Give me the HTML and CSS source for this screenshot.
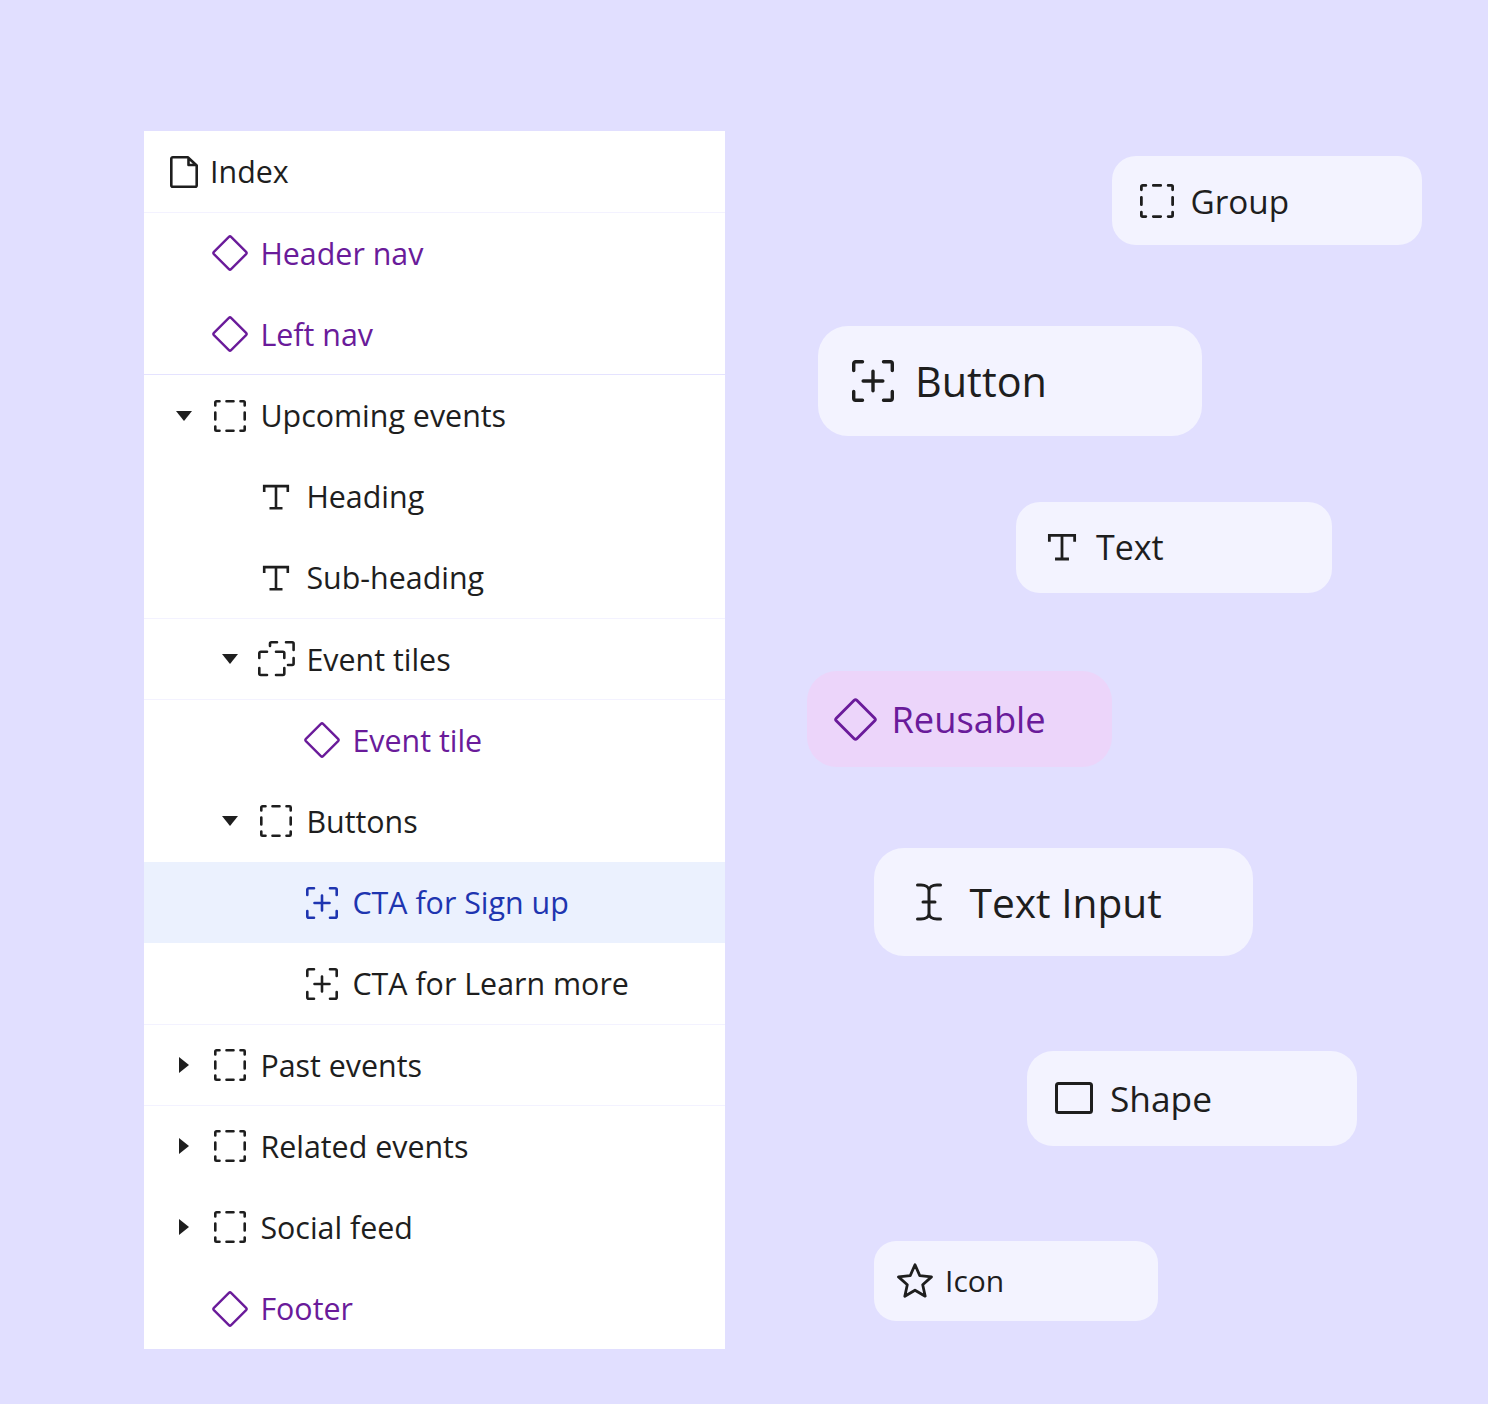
FILE: index.html
```html
<html>
    <head>
        <title>Layers</title>
        <meta charset="UTF-8" />
        <link rel="stylesheet" href="styles.css">
    </head>
    <body>
        <svg class="defs" width="0" height="0">
            <symbol id="i-page" viewBox="0 0 28 32">
                <path d="M2.800 1.300h15L26.700 9.500V29.200a1.500 1.500 0 0 1-1.500 1.500H2.800a1.500 1.500 0 0 1-1.500-1.500V2.800a1.500 1.500 0 0 1 1.500-1.500zM18.500 2V9H26" fill="none" stroke="currentColor" stroke-width="2.600" stroke-linejoin="round"/>
            </symbol>
            <symbol id="i-diamond" viewBox="0 0 36 36">
                <path d="M16.900 1.900a1.600 1.600 0 0 1 2.200 0L34.100 16.900a1.600 1.600 0 0 1 0 2.200L19.100 34.100a1.600 1.600 0 0 1-2.200 0L1.900 19.100a1.600 1.600 0 0 1 0-2.200z" fill="none" stroke="currentColor" stroke-width="2.400"/>
            </symbol>
            <symbol id="i-group" viewBox="0 0 32 32">
                <path d="M1.300 5.500V2.500a1.200 1.200 0 0 1 1.200-1.200H5.500M12.500 1.300h7M26.500 1.300h3a1.200 1.200 0 0 1 1.200 1.200V5.500M30.700 12.500v7M30.700 26.500v3a1.200 1.200 0 0 1-1.200 1.200H26.500M19.500 30.700h-7M5.500 30.700h-3a1.200 1.200 0 0 1-1.200-1.200V26.500M1.300 19.500v-7" fill="none" stroke="currentColor" stroke-width="2.600" stroke-linecap="round"/>
            </symbol>
            <symbol id="i-tiles" viewBox="0 0 37 36">
                <path d="M12 5V2.800a1.500 1.500 0 0 1 1.500-1.500H19M28 1.300h6.100a1.500 1.500 0 0 1 1.500 1.500V9M35.600 17v5.500a1.500 1.500 0 0 1-1.500 1.500H30M1.300 17v-4.800a1.500 1.500 0 0 1 1.500-1.500H9M18 10.700h6.800a1.500 1.500 0 0 1 1.500 1.500V17M1.300 27v5.500a1.500 1.500 0 0 0 1.500 1.500H9M18 34h6.800a1.500 1.500 0 0 0 1.500-1.500V27" fill="none" stroke="currentColor" stroke-width="2.600" stroke-linecap="round"/>
            </symbol>
            <symbol id="i-cta" viewBox="0 0 32 32">
                <path d="M1.300 8V2.800a1.500 1.500 0 0 1 1.500-1.500H8M24 1.300h5.200a1.500 1.500 0 0 1 1.500 1.500V8M30.700 24v5.200a1.500 1.500 0 0 1-1.500 1.500H24M8 30.700H2.800a1.500 1.500 0 0 1-1.500-1.500V24M16 8.500v15M8.500 16h15" fill="none" stroke="currentColor" stroke-width="2.600" stroke-linecap="round"/>
            </symbol>
            <symbol id="i-text" viewBox="0 0 28 28">
                <path d="M2.200 9V3.100H25.800V9M14 3.100V25.200M7.500 25.200H20.500" fill="none" stroke="currentColor" stroke-width="2.600"/>
            </symbol>
            <symbol id="i-input" viewBox="0 0 26 38">
                <path d="M1.500 2h3.500c4.500 0 8 2 8 5.500v23c0 3.500-3.500 5.500-8 5.500H1.500M24.500 2h-3.500c-4.500 0-8 2-8 5.500v23c0 3.500 3.500 5.500 8 5.500h3.500M7 19h12" fill="none" stroke="currentColor" stroke-width="3" stroke-linecap="round"/>
            </symbol>
            <symbol id="i-shape" viewBox="0 0 38 32">
                <rect x="1.500" y="1.500" width="35" height="29" rx="2" fill="none" stroke="currentColor" stroke-width="3"/>
            </symbol>
            <symbol id="i-star" viewBox="0 0 36 35">
                <path d="M18 1.700l4.800 11 11.700 1.200-8.800 7.800 2.500 11.500L18 27.200 7.800 33.200l2.500-11.500-8.800-7.800 11.700-1.200z" fill="none" stroke="currentColor" stroke-width="2.800" stroke-linejoin="round"/>
            </symbol>
            <symbol id="i-down" viewBox="0 0 16 10">
                <path d="M0 0h16L8 10z" fill="currentColor"/>
            </symbol>
            <symbol id="i-right" viewBox="0 0 10 16">
                <path d="M0 0v16L10 8z" fill="currentColor"/>
            </symbol>
        </svg>

        <ul class="tree">
            <li class="row line">
                <svg class="icon page"><use href="#i-page"/></svg>
                <span>Index</span>
            </li>
            <li class="row depth-1 reusable">
                <svg class="icon diamond"><use href="#i-diamond"/></svg>
                <span>Header nav</span>
            </li>
            <li class="row depth-1 reusable line-strong">
                <svg class="icon diamond"><use href="#i-diamond"/></svg>
                <span>Left nav</span>
            </li>
            <li class="row depth-1">
                <svg class="caret down"><use href="#i-down"/></svg>
                <svg class="icon group"><use href="#i-group"/></svg>
                <span>Upcoming events</span>
            </li>
            <li class="row depth-2">
                <svg class="icon text"><use href="#i-text"/></svg>
                <span>Heading</span>
            </li>
            <li class="row depth-2 line">
                <svg class="icon text"><use href="#i-text"/></svg>
                <span>Sub-heading</span>
            </li>
            <li class="row depth-2 line">
                <svg class="caret down"><use href="#i-down"/></svg>
                <svg class="icon tiles"><use href="#i-tiles"/></svg>
                <span>Event tiles</span>
            </li>
            <li class="row depth-3 reusable">
                <svg class="icon diamond"><use href="#i-diamond"/></svg>
                <span>Event tile</span>
            </li>
            <li class="row depth-2">
                <svg class="caret down"><use href="#i-down"/></svg>
                <svg class="icon group"><use href="#i-group"/></svg>
                <span>Buttons</span>
            </li>
            <li class="row depth-3 selected">
                <svg class="icon group"><use href="#i-cta"/></svg>
                <span>CTA for Sign up</span>
            </li>
            <li class="row depth-3 line">
                <svg class="icon group"><use href="#i-cta"/></svg>
                <span>CTA for Learn more</span>
            </li>
            <li class="row depth-1 line">
                <svg class="caret right"><use href="#i-right"/></svg>
                <svg class="icon group"><use href="#i-group"/></svg>
                <span>Past events</span>
            </li>
            <li class="row depth-1">
                <svg class="caret right"><use href="#i-right"/></svg>
                <svg class="icon group"><use href="#i-group"/></svg>
                <span>Related events</span>
            </li>
            <li class="row depth-1">
                <svg class="caret right"><use href="#i-right"/></svg>
                <svg class="icon group"><use href="#i-group"/></svg>
                <span>Social feed</span>
            </li>
            <li class="row depth-1 reusable">
                <svg class="icon diamond"><use href="#i-diamond"/></svg>
                <span>Footer</span>
            </li>
        </ul>

        <div class="chip chip-group">
            <svg><use href="#i-group"/></svg>
            <span>Group</span>
        </div>
        <div class="chip chip-button">
            <svg><use href="#i-cta"/></svg>
            <span>Button</span>
        </div>
        <div class="chip chip-text">
            <svg><use href="#i-text"/></svg>
            <span>Text</span>
        </div>
        <div class="chip chip-reusable">
            <svg><use href="#i-diamond"/></svg>
            <span>Reusable</span>
        </div>
        <div class="chip chip-input">
            <svg><use href="#i-input"/></svg>
            <span>Text Input</span>
        </div>
        <div class="chip chip-shape">
            <svg><use href="#i-shape"/></svg>
            <span>Shape</span>
        </div>
        <div class="chip chip-icon">
            <svg><use href="#i-star"/></svg>
            <span>Icon</span>
        </div>
    </body>
</html>
```

FILE: styles.css
```css
html,
body {
    height: 1404px;
}
body {
    margin: 0;
    position: relative;
    overflow: hidden;
    background: #e1dfff;
    color: #1e1e1e;
    font-family: "Open Sans", sans-serif;
}
.defs {
    position: absolute;
}

/* Layer tree */
.tree {
    list-style: none;
    margin: 131px 0 0 144px;
    padding: 0;
    width: 581px;
    background: #fff;
    display: flex;
    flex-direction: column;
}
.row {
    height: 81.2px;
    box-sizing: border-box;
    display: flex;
    align-items: center;
    position: relative;
    padding-top: 0.8px;
    padding-left: 26px;
    font-size: 30.4px;
}
.line {
    box-shadow: 0 1px 0 #f3f2ff;
}
.line-strong {
    box-shadow: inset 0 -1px 0 #e5e3ff;
}
.depth-1 {
    padding-left: 68px;
}
.depth-2 {
    padding-left: 114px;
}
.depth-3 {
    padding-left: 160px;
}
.reusable {
    color: #6a1b9a;
}
.selected {
    background: #ebf1fe;
    color: #1e35b0;
}
.icon {
    flex: none;
}
.page {
    width: 28px;
    height: 32px;
    margin-right: 12px;
}
.diamond {
    width: 36px;
    height: 36px;
    margin-right: 12.4px;
}
.group {
    width: 32px;
    height: 32px;
    margin: 0 14.4px 0 2px;
}
.tiles {
    width: 37px;
    height: 36px;
    margin-right: 11.4px;
}
.text {
    width: 28px;
    height: 28px;
    margin: 0 16.400px 0 4px;
}
.caret {
    position: absolute;
}
.caret.down {
    width: 16px;
    height: 10px;
}
.caret.right {
    width: 10px;
    height: 16px;
}
.depth-1 .caret {
    left: 32px;
}
.depth-2 .caret {
    left: 78px;
}
.depth-1 .caret.right {
    left: 35px;
}

/* Floating chips, each one has its own place on the canvas */
.chip {
    position: absolute;
    box-sizing: border-box;
    display: flex;
    align-items: center;
    background: #f3f3ff;
}
.chip svg {
    flex: none;
}
.chip-group {
    left: 1112px;
    top: 156px;
    width: 310px;
    height: 89px;
    border-radius: 24px;
    padding-left: 28px;
    font-size: 33.3px;
}
.chip-group svg {
    width: 34px;
    height: 34px;
    margin-right: 16.5px;
}
.chip-button {
    left: 818px;
    top: 326px;
    width: 384px;
    height: 110px;
    border-radius: 30px;
    padding-left: 34px;
    font-size: 41.4px;
}
.chip-button svg {
    width: 42px;
    height: 42px;
    margin-right: 21px;
}
.chip-text {
    left: 1016px;
    top: 502px;
    width: 316px;
    height: 91px;
    border-radius: 24px;
    padding: 0 0 1px 31px;
    font-size: 34px;
}
.chip-text svg {
    width: 30px;
    height: 30px;
    margin-right: 19px;
}
.chip-reusable {
    left: 807px;
    top: 671px;
    width: 305px;
    height: 96px;
    border-radius: 30px;
    padding-left: 27px;
    font-size: 36.3px;
    background: #ecd5fa;
    color: #6a1b9a;
}
.chip-reusable svg {
    width: 43px;
    height: 43px;
    margin-right: 14.4px;
}
.chip-input {
    left: 874px;
    top: 848px;
    width: 379px;
    height: 108px;
    border-radius: 30px;
    padding: 0 0 1px 42px;
    font-size: 40.7px;
}
.chip-input svg {
    width: 26px;
    height: 38px;
    margin-right: 27.5px;
}
.chip-shape {
    left: 1027px;
    top: 1051px;
    width: 330px;
    height: 95px;
    border-radius: 26px;
    padding: 0 0 1px 28px;
    font-size: 35.3px;
}
.chip-shape svg {
    width: 38px;
    height: 32px;
    margin-right: 17px;
}
.chip-icon {
    left: 874px;
    top: 1241px;
    width: 284px;
    height: 80px;
    border-radius: 22px;
    padding: 0 0 1px 23px;
    font-size: 30px;
}
.chip-icon svg {
    width: 36px;
    height: 35px;
    margin-right: 12px;
}
```
